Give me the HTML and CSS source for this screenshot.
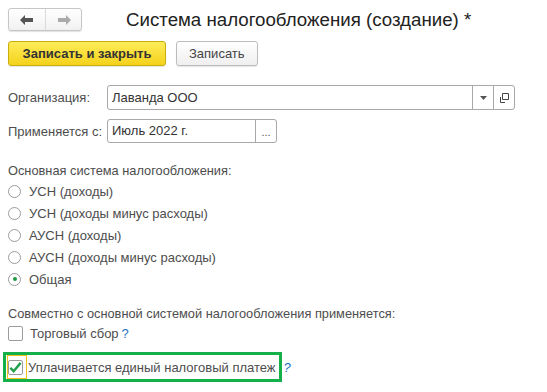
FILE: index.html
```html
<!DOCTYPE html>
<html lang="ru">
<head>
    <meta charset="UTF-8">
    <meta name="viewport" content="width=device-width, initial-scale=1.0">
    <title>Система налогообложения</title>
    <link rel="stylesheet" href="styles.css">
</head>
<body>
    <div class="page">
        <div class="header">
            <div class="nav">
                <button class="nav-btn">
                    <svg width="16" height="12" viewBox="0 0 16 12"><path d="M1 6 L6 1 V4 H14 V8 H6 V11 Z" fill="#555"/></svg>
                </button>
                <button class="nav-btn">
                    <svg width="16" height="12" viewBox="0 0 16 12"><path d="M15 6 L10 1 V4 H2 V8 H10 V11 Z" fill="#aaa"/></svg>
                </button>
            </div>
            <h1 class="title">Система налогообложения (создание) *</h1>
        </div>

        <div class="toolbar">
            <button class="btn btn-primary">Записать и закрыть</button>
            <button class="btn">Записать</button>
        </div>

        <div class="field-row">
            <span class="field-label">Организация:</span>
            <div class="input input-org">
                <span class="input-text">Лаванда ООО</span>
                <span class="input-btn">
                    <svg width="7" height="4" viewBox="0 0 7 4"><path d="M0 0 H7 L3.5 4 Z" fill="#555"/></svg>
                </span>
                <span class="input-btn">
                    <svg width="12" height="12" viewBox="0 0 12 12"><path d="M4.5 1.5 H10.5 V7.5 H4.5 Z" fill="none" stroke="#444"/><path d="M2.5 5 V10.5 H7" fill="none" stroke="#444"/></svg>
                </span>
            </div>
        </div>

        <div class="field-row">
            <span class="field-label">Применяется с:</span>
            <div class="input input-date">
                <span class="input-text">Июль 2022 г.</span>
                <span class="input-btn input-btn-dots">...</span>
            </div>
        </div>

        <div class="group-title">Основная система налогообложения:</div>
        <div class="radio-list">
            <div class="radio-row"><span class="radio"></span>УСН (доходы)</div>
            <div class="radio-row"><span class="radio"></span>УСН (доходы минус расходы)</div>
            <div class="radio-row"><span class="radio"></span>АУСН (доходы)</div>
            <div class="radio-row"><span class="radio"></span>АУСН (доходы минус расходы)</div>
            <div class="radio-row"><span class="radio radio-on"></span>Общая</div>
        </div>

        <div class="group-title group-title-second">Совместно с основной системой налогообложения применяется:</div>
        <div class="check-row">
            <span class="checkbox"></span>Торговый сбор <span class="help">?</span>
        </div>

        <div class="check-row check-row-marked">
            <div class="highlight">
                <span class="focus">
                    <span class="checkbox">
                        <svg width="14" height="13" viewBox="0 0 14 13"><path d="M1.5 7 L5 10.5 L12.5 1.5" fill="none" stroke="#22a04a" stroke-width="2.6"/></svg>
                    </span>
                </span>
                Уплачивается единый налоговый платеж
            </div>
            <span class="help help-outside">?</span>
        </div>
    </div>
</body>
</html>
```

FILE: styles.css
```css
body {
    margin: 0;
    font-family: "Liberation Sans", Arial, sans-serif;
    font-size: 13px;
    color: #4d4d4d;
    background-color: #fff;
}
.page {
    padding: 8px;
}
.header {
    display: flex;
    align-items: center;
    height: 23px;
}
.nav {
    display: flex;
    border: 1px solid #c6c6c6;
    border-radius: 3px;
    background: linear-gradient(#fff, #f1f1f1);
    box-shadow: 0 1px 1px rgba(0, 0, 0, 0.12);
}
.nav-btn {
    display: flex;
    align-items: center;
    justify-content: center;
    width: 36px;
    height: 21px;
    padding: 0;
    border: none;
    background: none;
}
.nav-btn + .nav-btn {
    border-left: 1px solid #dadada;
}
.title {
    margin: 0 0 0 44px;
    font-size: 18.7px;
    font-weight: normal;
    color: #222;
    line-height: 23px;
}
.toolbar {
    display: flex;
    gap: 10px;
    margin-top: 10px;
}
.btn {
    height: 25px;
    padding: 0 12px;
    font-family: inherit;
    font-size: 13px;
    color: #444;
    border: 1px solid #bcbcbc;
    border-radius: 3px;
    background: linear-gradient(#fff, #efefef);
    box-shadow: 0 1px 1px rgba(0, 0, 0, 0.1);
}
.btn-primary {
    width: 158px;
    font-weight: bold;
    color: #333;
    border-color: #c9ae0c;
    background: linear-gradient(#ffec59, #f4d21b);
}
.field-row {
    display: flex;
    align-items: center;
    margin-top: 9px;
}
.toolbar + .field-row {
    margin-top: 19px;
}
.field-label {
    width: 99px;
}
.input {
    display: flex;
    height: 23px;
    border: 1px solid #a8a8a8;
    border-radius: 3px;
    color: #333;
}
.input-org {
    width: 406px;
}
.input-date {
    width: 168px;
    height: 22px;
}
.input-text {
    flex: 1;
    padding-left: 4px;
    line-height: 23px;
}
.input-date .input-text {
    line-height: 22px;
}
.input-btn {
    display: flex;
    align-items: center;
    justify-content: center;
    width: 20px;
    border-left: 1px solid #a8a8a8;
}
.input-btn-dots {
    font-size: 11px;
    color: #555;
    padding-top: 2px;
}
.group-title {
    margin-top: 19px;
    line-height: 18px;
    font-size: 12.8px;
}
.group-title-second {
    margin-top: 15px;
}
.radio-row {
    display: flex;
    align-items: center;
    height: 22px;
}
.radio {
    display: flex;
    align-items: center;
    justify-content: center;
    box-sizing: border-box;
    width: 13px;
    height: 13px;
    margin-right: 8px;
    border: 1px solid #9c9c9c;
    border-radius: 50%;
    background: #fff;
}
.radio-on::after {
    content: "";
    width: 4px;
    height: 4px;
    border-radius: 50%;
    background: #1f9a3e;
}
.check-row {
    display: flex;
    align-items: center;
    height: 20px;
}
.checkbox {
    display: inline-flex;
    align-items: center;
    justify-content: center;
    box-sizing: border-box;
    width: 15px;
    height: 15px;
    margin-right: 7px;
    border: 1px solid #9c9c9c;
    border-radius: 2px;
    background: #fff;
}
.help {
    margin-left: 3px;
    color: #1a72c2;
}
.check-row-marked {
    height: auto;
    margin-top: 9px;
}
.highlight {
    display: flex;
    align-items: center;
    height: 24px;
    margin-left: -5px;
    padding-right: 3px;
    border: 3px solid #16b04a;
}
.focus {
    display: flex;
    align-items: center;
    box-sizing: border-box;
    height: 24px;
    margin: 0 1px 0 1px;
    padding: 0 3px 0 0;
    border: 1px solid #f2c21a;
}
.focus .checkbox {
    margin-right: 0;
}
.help-outside {
    margin-left: 2px;
    font-style: italic;
}
```
